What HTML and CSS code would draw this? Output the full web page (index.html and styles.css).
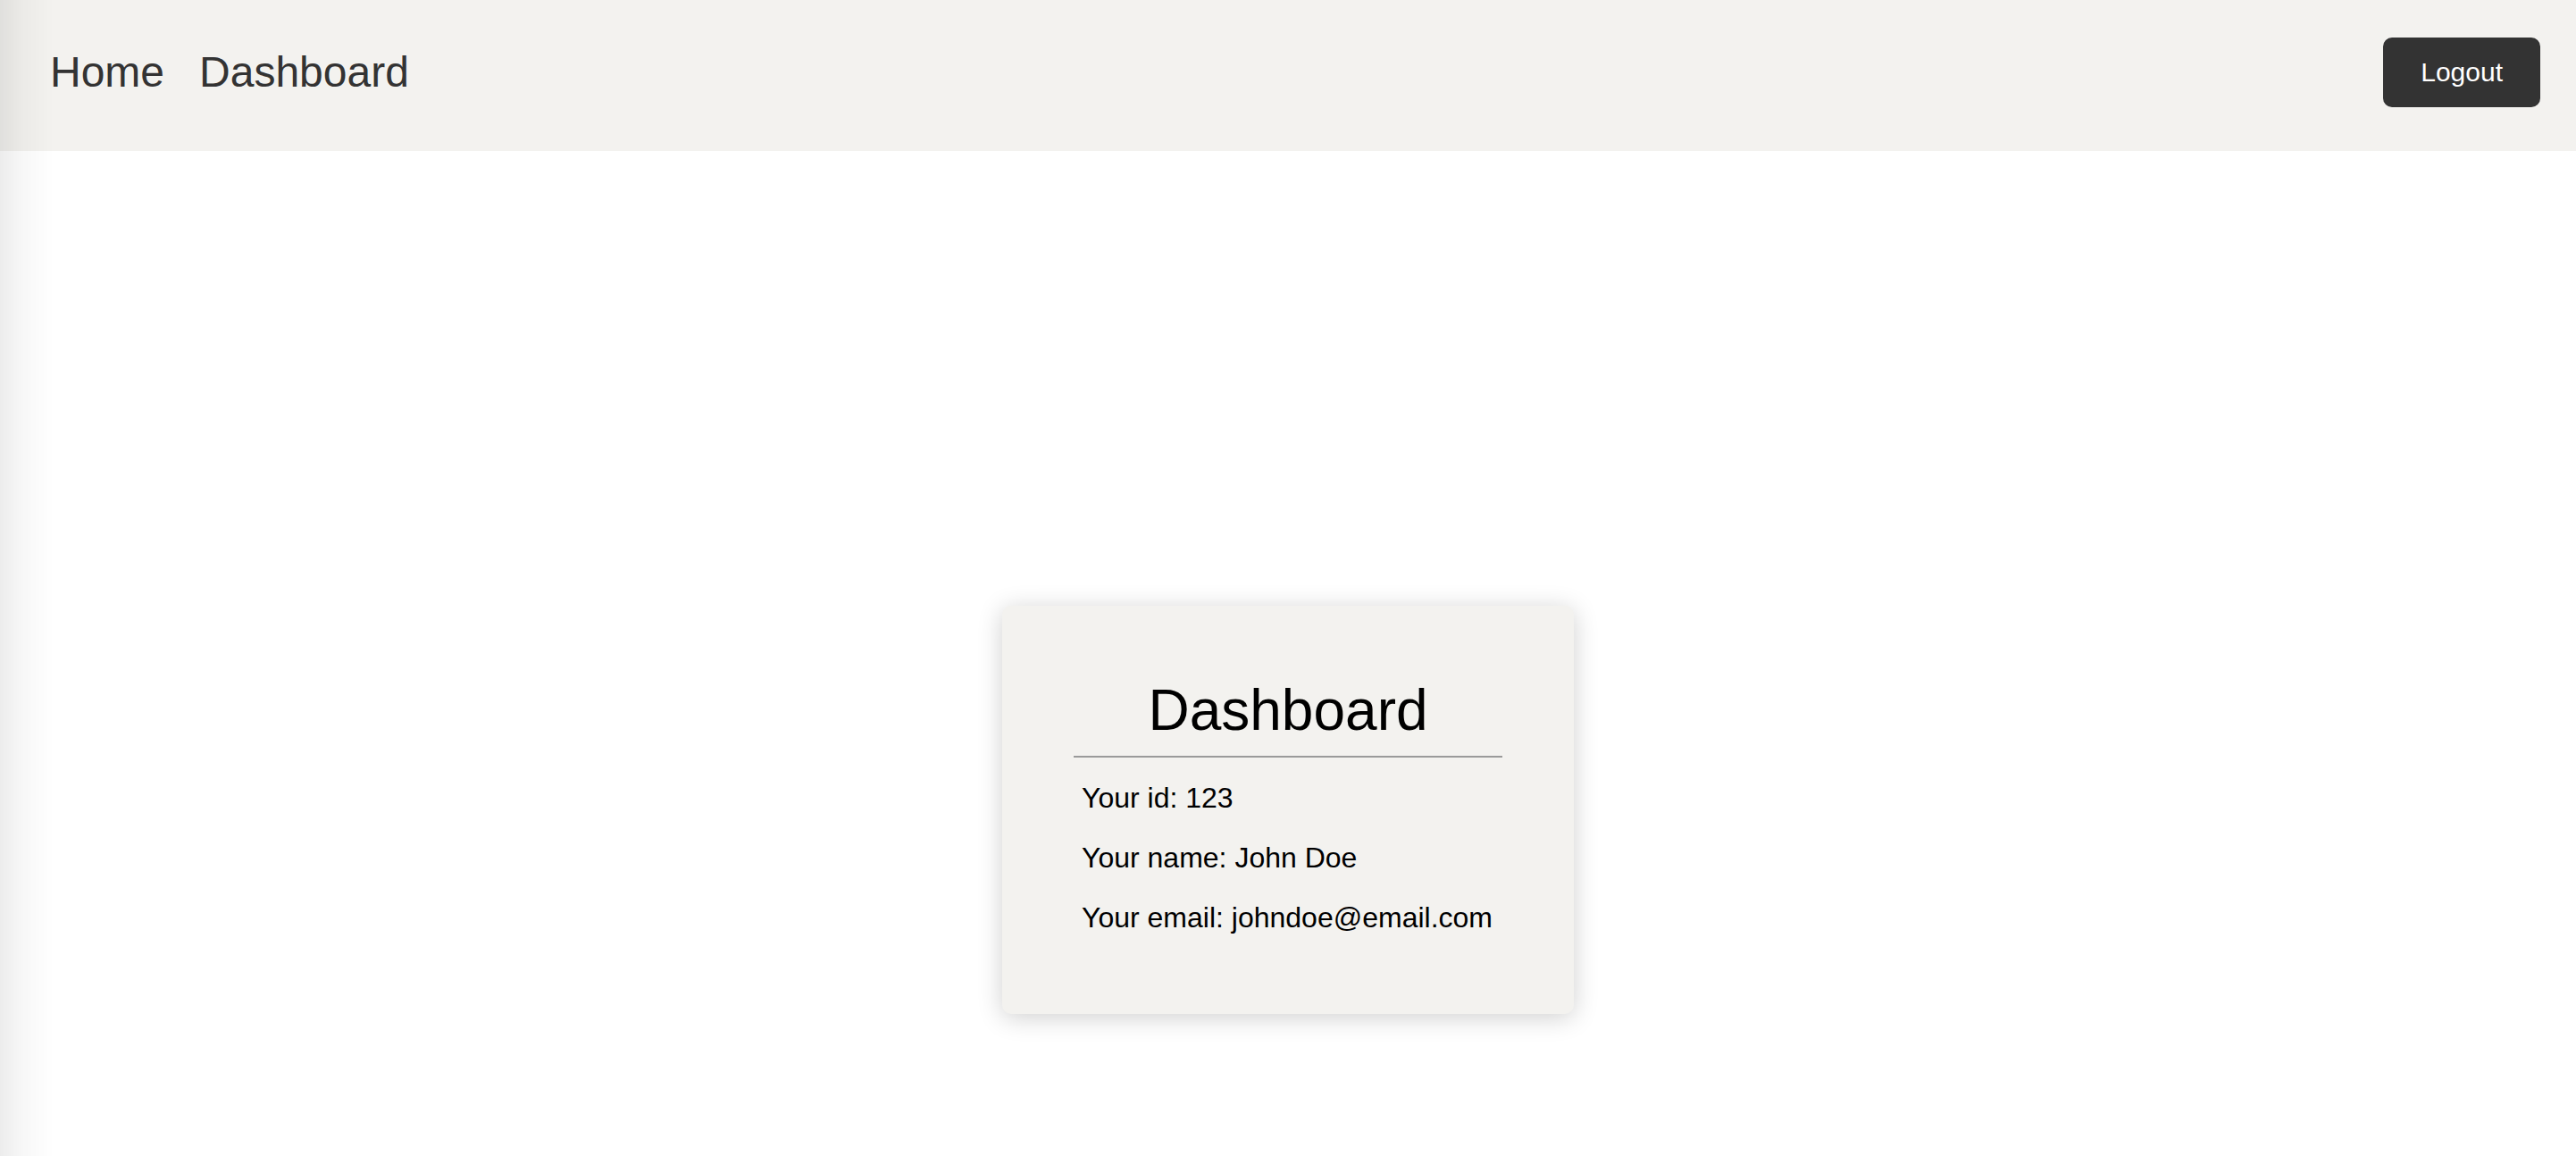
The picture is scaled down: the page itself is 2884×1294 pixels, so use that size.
FILE: index.html
```html
<!DOCTYPE html>
<html lang="en">
<head>
<meta charset="utf-8">
<title>Dashboard</title>
<link rel="stylesheet" href="styles.css">
</head>
<body>
<header class="navbar">
  <nav class="nav-links">
    <a class="nav-link" href="#">Home</a>
    <a class="nav-link" href="#">Dashboard</a>
  </nav>
  <button class="logout-btn" type="button">Logout</button>
</header>
<main class="main">
  <section class="card">
    <h1 class="card-title">Dashboard</h1>
    <div class="card-info">
      <p class="info-line">Your id: 123</p>
      <p class="info-line">Your name: John Doe</p>
      <p class="info-line">Your email: johndoe@email.com</p>
    </div>
  </section>
</main>
<div class="edge-shade"></div>
</body>
</html>
```

FILE: styles.css
```css
* {
  box-sizing: border-box;
}

html, body {
  margin: 0;
  padding: 0;
  background: #ffffff;
  font-family: "Liberation Sans", Arial, Helvetica, sans-serif;
  color: #000;
}

body {
  min-height: 1294px;
}

.navbar {
  height: 169px;
  background: #f3f2ef;
  display: flex;
  align-items: center;
  justify-content: space-between;
  padding: 0 40px 8px 56px;
}

.nav-links {
  display: flex;
  align-items: center;
  gap: 39px;
}

.nav-link {
  font-size: 48px;
  line-height: 56px;
  color: #333333;
  text-decoration: none;
}

.logout-btn {
  font-family: "Liberation Sans", Arial, Helvetica, sans-serif;
  font-size: 30px;
  line-height: 36px;
  color: #ffffff;
  background: #333333;
  border: none;
  border-radius: 10px;
  padding: 21px 42px;
  cursor: pointer;
}

.main {
  display: flex;
  justify-content: center;
  align-items: flex-start;
  padding-top: 509px;
}

.card {
  width: 640px;
  background: #f3f2ef;
  border-radius: 10px;
  box-shadow: 0 4px 28px rgba(0, 0, 0, 0.19);
  padding: 81px 80px 90px;
}

.card-title {
  margin: 0;
  font-size: 64px;
  line-height: 72px;
  font-weight: 400;
  text-align: center;
  color: #000;
  padding-bottom: 15px;
  border-bottom: 2px solid #9a9a9a;
}

.card-info {
  display: flex;
  flex-direction: column;
  gap: 31px;
  margin-top: 27px;
  padding-left: 9px;
}

.info-line {
  margin: 0;
  font-size: 32px;
  line-height: 36px;
  color: #000;
}

.edge-shade {
  position: fixed;
  top: 0;
  left: 0;
  bottom: 0;
  width: 60px;
  pointer-events: none;
  background: linear-gradient(to right, rgba(0, 0, 0, 0.075), rgba(0, 0, 0, 0.03) 40%, rgba(0, 0, 0, 0));
}
```
